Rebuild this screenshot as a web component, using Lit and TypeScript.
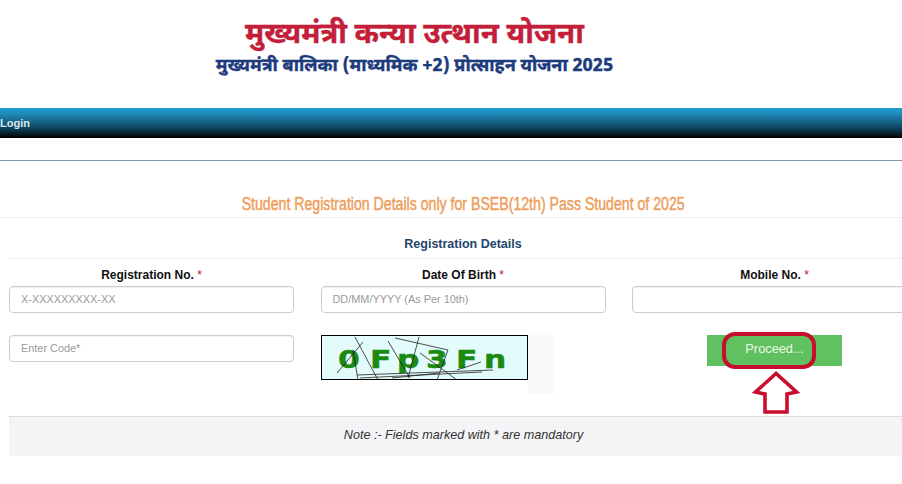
import { LitElement, html, css, svg } from "lit";
import { customElement } from "lit/decorators.js";

const captchaLines: number[][] = [
  [34, 2, 57, 45], [42, 7, 16, 38], [67, 6, 89, 43], [74, 3, 127, 15],
  [98, 2, 87, 43], [127, 15, 116, 45], [99, 18, 136, 45], [36, 40, 172, 35],
  [39, 43, 161, 37], [71, 43, 118, 38], [136, 35, 160, 27], [32, 15, 37, 45],
];
const letters: [string, number][] = [
  ["0", 17],
  ["F", 49],
  ["p", 76],
  ["3", 105],
  ["F", 135],
  ["n", 163],
];

@customElement("app-root")
export class AppRoot extends LitElement {
  static styles = css`
    :host {
      display: block;
      width: 902px;
      height: 484px;
      overflow: hidden;
      position: relative;
      background: #fff;
      font-family: "Liberation Sans", Arial, sans-serif;
    }
    .brand {
      height: 108px;
      box-sizing: border-box;
      padding: 18px 73px 0 0;
      display: flex;
      flex-direction: column;
      align-items: center;
      font-family: "Noto Sans Devanagari", "Noto Sans", "Lato", sans-serif;
      font-weight: 700;
    }
    .hi-title {
      font-size: 29.5px;
      line-height: 36px;
      color: #c41f3a;
      -webkit-text-stroke: 0.4px #c41f3a;
    }
    .hi-sub {
      font-size: 18px;
      line-height: 25px;
      color: #1c3b7d;
      -webkit-text-stroke: 0.4px #1c3b7d;
    }
    .bar {
      height: 30px;
      background: linear-gradient(to bottom, #1f9bd1 0%, #1f8ab9 20%, #0c3e55 70%, #000 100%);
      color: #d9e6ee;
      font-size: 11px;
      font-weight: 700;
      line-height: 30px;
    }
    .rule {
      margin-top: 22px;
      height: 1px;
      background: #8396a8;
    }
    .heading {
      margin: 32px 0 0;
      height: 24px;
      box-sizing: content-box;
      padding-left: 24px;
      border-bottom: 1px solid #eee;
      text-align: center;
      font-size: 18px;
      line-height: 22px;
      font-weight: 400;
      color: #ee9d5a;
      -webkit-text-stroke: 0.45px #ee9d5a;
    }
    .heading span {
      display: inline-block;
      white-space: nowrap;
      transform: scaleX(0.785);
      transform-origin: center;
    }
    .form {
      padding-left: 9px;
    }
    .subhead {
      height: 41px;
      box-sizing: border-box;
      border-bottom: 1px solid #eee;
      text-align: center;
      color: #23466e;
      font-size: 12.5px;
      font-weight: 700;
      line-height: 53px;
      width: 920px;
      padding-right: 12px;
    }
    .grid {
      display: grid;
      grid-template-columns: repeat(3, 285px);
      column-gap: 26.5px;
      margin-top: 8px;
    }
    .field {
      display: flex;
      flex-direction: column;
      height: 49px;
    }
    label {
      display: block;
      height: 19px;
      text-align: center;
      font-size: 12px;
      font-weight: 700;
      line-height: 16px;
      color: #111;
    }
    label span {
      color: #b3152c;
      font-weight: 400;
    }
    .input {
      height: 27px;
      box-sizing: border-box;
      border: 1px solid #ccc;
      border-radius: 4px;
      padding: 0 11px;
      font-size: 10.9px;
      line-height: 25px;
      color: #9a9a9a;
      box-shadow: inset 0 1px 1px rgba(0, 0, 0, 0.06);
    }
    .row2 {
      margin-top: 22px;
      height: 81px;
    }
    .captcha-wrap {
      display: flex;
      align-items: flex-start;
    }
    .captcha {
      display: block;
      flex: none;
      width: 207px;
      height: 45px;
      background: #e4fbfb;
    }
    .captcha-side {
      width: 26px;
      height: 59px;
      background: #f9f8fb;
    }
    .captcha-text {
      font-family: "DejaVu Sans", sans-serif;
      font-weight: 700;
      font-size: 25px;
      fill: #1b8a10;
      stroke: #1b8a10;
      stroke-width: 0.5px;
    }
    .proceed-cell {
      display: flex;
      justify-content: center;
      align-items: flex-start;
    }
    .proceed {
      width: 135px;
      height: 31px;
      box-sizing: border-box;
      border: 0;
      padding: 0 0 4px 0;
      background: #5fc15f;
      color: #f1f8e8;
      font-family: inherit;
      font-size: 12.8px;
      text-align: center;
    }
    .note {
      height: 40px;
      box-sizing: border-box;
      border-top: 1px solid #dddbe0;
      background: #f4f3f5;
      text-align: center;
      font-size: 12.6px;
      font-style: italic;
      line-height: 37px;
      color: #333;
      width: 909px;
    }
    .ring {
      position: absolute;
      left: 722px;
      top: 332px;
      width: 94px;
      height: 37px;
      box-sizing: border-box;
      border: 4px solid #c50f2c;
      border-radius: 13px;
    }
    .arrow {
      position: absolute;
      left: 750px;
      top: 368px;
      width: 52px;
      height: 50px;
    }
    .grid.row2 {
      margin-top: 19px;
    }
  `;

  render() {
    return html`
      <header class="brand">
        <div class="hi-title">मुख्यमंत्री कन्या उत्थान योजना</div>
        <div class="hi-sub">मुख्यमंत्री बालिका (माध्यमिक +2) प्रोत्साहन योजना 2025</div>
      </header>
      <nav class="bar">Login</nav>
      <div class="rule"></div>
      <h1 class="heading"><span>Student Registration Details only for BSEB(12th) Pass Student of 2025</span></h1>
      <section class="form">
        <div class="subhead">Registration Details</div>
        <div class="grid">
          <div class="field">
            <label>Registration No. <span>*</span></label>
            <div class="input">X-XXXXXXXXX-XX</div>
          </div>
          <div class="field">
            <label>Date Of Birth <span>*</span></label>
            <div class="input">DD/MM/YYYY (As Per 10th)</div>
          </div>
          <div class="field">
            <label>Mobile No. <span>*</span></label>
            <div class="input"></div>
          </div>
        </div>
        <div class="grid row2">
          <div><div class="input">Enter Code*</div></div>
          <div class="captcha-wrap">
            <svg class="captcha" viewBox="0 0 207 45">
              ${letters.map(
                ([c, x]) =>
                  svg`<text class="captcha-text" transform="translate(${x} 33) scale(1.25 1)">${c}</text>`
              )}
              ${captchaLines.map(
                ([a, b, c, d]) =>
                  svg`<line x1=${a} y1=${b} x2=${c} y2=${d} stroke="#222" stroke-width="0.8"></line>`
              )}
              <rect x="0.5" y="0.5" width="206" height="44" fill="none" stroke="#000"></rect>
            </svg>
            <div class="captcha-side"></div>
          </div>
          <div class="proceed-cell"><button class="proceed">Proceed...</button></div>
        </div>
        <div class="note">Note :- Fields marked with * are mandatory</div>
      </section>
      <div class="ring"></div>
      <svg class="arrow" viewBox="0 0 52 50">
        <path
          d="M26 5.5 L5.5 24 L15 26 L15 44 L37 44 L37 26 L46.5 24 Z"
          fill="#fff"
          stroke="#c50f2c"
          stroke-width="3.6"
          stroke-linejoin="miter"
        ></path>
      </svg>
    `;
  }
}
